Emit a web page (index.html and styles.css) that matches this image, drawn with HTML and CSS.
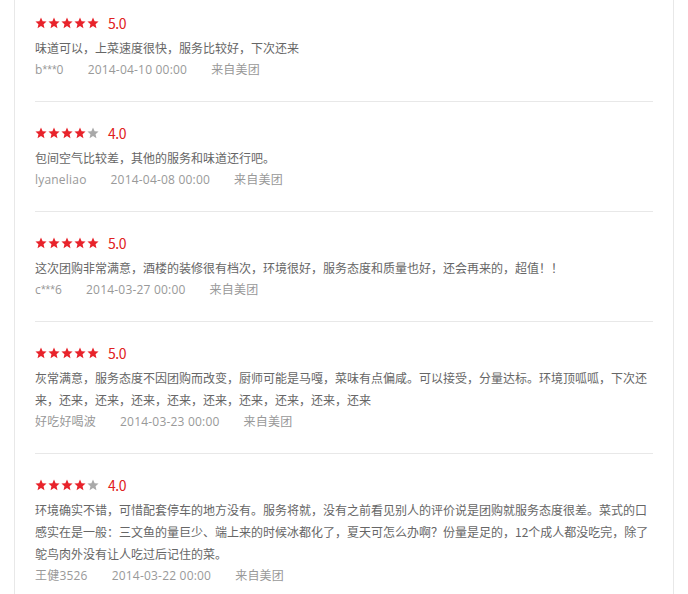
FILE: index.html
```html
<!DOCTYPE html>
<html lang="zh-CN">

<head>
    <meta charset="UTF-8">
    <meta name="viewport" content="width=device-width, initial-scale=1.0">
    <title>用户评价</title>
    <link rel="stylesheet" href="styles.css">
</head>

<body>
    <svg width="0" height="0" class="defs">
        <defs>
            <symbol id="star" viewBox="0 0 24 24">
                <path d="M12 1.2l3.2 7.3 7.9.7-6 5.3 1.8 7.8L12 18.2l-6.9 4.1 1.8-7.8-6-5.3 7.9-.7z" />
            </symbol>
        </defs>
    </svg>

    <div class="reviews">
        <!-- 评价 1 -->
        <div class="review">
            <div class="rating">
                <span class="stars">
                    <svg class="star on"><use href="#star" /></svg>
                    <svg class="star on"><use href="#star" /></svg>
                    <svg class="star on"><use href="#star" /></svg>
                    <svg class="star on"><use href="#star" /></svg>
                    <svg class="star on"><use href="#star" /></svg>
                </span>
                <span class="score">5.0</span>
            </div>
            <p class="content">味道可以，上菜速度很快，服务比较好，下次还来</p>
            <div class="meta">
                <span>b<span class="mask">***</span>0</span>
                <span>2014-04-10 00:00</span>
                <span>来自美团</span>
            </div>
        </div>

        <!-- 评价 2 -->
        <div class="review">
            <div class="rating">
                <span class="stars">
                    <svg class="star on"><use href="#star" /></svg>
                    <svg class="star on"><use href="#star" /></svg>
                    <svg class="star on"><use href="#star" /></svg>
                    <svg class="star on"><use href="#star" /></svg>
                    <svg class="star"><use href="#star" /></svg>
                </span>
                <span class="score">4.0</span>
            </div>
            <p class="content">包间空气比较差，其他的服务和味道还行吧。</p>
            <div class="meta">
                <span>lyaneliao</span>
                <span>2014-04-08 00:00</span>
                <span>来自美团</span>
            </div>
        </div>

        <!-- 评价 3 -->
        <div class="review">
            <div class="rating">
                <span class="stars">
                    <svg class="star on"><use href="#star" /></svg>
                    <svg class="star on"><use href="#star" /></svg>
                    <svg class="star on"><use href="#star" /></svg>
                    <svg class="star on"><use href="#star" /></svg>
                    <svg class="star on"><use href="#star" /></svg>
                </span>
                <span class="score">5.0</span>
            </div>
            <p class="content">这次团购非常满意，酒楼的装修很有档次，环境很好，服务态度和质量也好，还会再来的，超值！！</p>
            <div class="meta">
                <span>c<span class="mask">***</span>6</span>
                <span>2014-03-27 00:00</span>
                <span>来自美团</span>
            </div>
        </div>

        <!-- 评价 4 -->
        <div class="review">
            <div class="rating">
                <span class="stars">
                    <svg class="star on"><use href="#star" /></svg>
                    <svg class="star on"><use href="#star" /></svg>
                    <svg class="star on"><use href="#star" /></svg>
                    <svg class="star on"><use href="#star" /></svg>
                    <svg class="star on"><use href="#star" /></svg>
                </span>
                <span class="score">5.0</span>
            </div>
            <p class="content">灰常满意，服务态度不因团购而改变，厨师可能是马嘎，菜味有点偏咸。可以接受，分量达标。环境顶呱呱，下次还来，还来，还来，还来，还来，还来，还来，还来，还来，还来</p>
            <div class="meta">
                <span>好吃好喝波</span>
                <span>2014-03-23 00:00</span>
                <span>来自美团</span>
            </div>
        </div>

        <!-- 评价 5 -->
        <div class="review">
            <div class="rating">
                <span class="stars">
                    <svg class="star on"><use href="#star" /></svg>
                    <svg class="star on"><use href="#star" /></svg>
                    <svg class="star on"><use href="#star" /></svg>
                    <svg class="star on"><use href="#star" /></svg>
                    <svg class="star"><use href="#star" /></svg>
                </span>
                <span class="score">4.0</span>
            </div>
            <p class="content">环境确实不错，可惜配套停车的地方没有。服务将就，没有之前看见别人的评价说是团购就服务态度很差。菜式的口感实在是一般：三文鱼的量巨少、端上来的时候冰都化了，夏天可怎么办啊？份量是足的，12个成人都没吃完，除了鸵鸟肉外没有让人吃过后记住的菜。</p>
            <div class="meta">
                <span>王健3526</span>
                <span>2014-03-22 00:00</span>
                <span>来自美团</span>
            </div>
        </div>
    </div>
</body>

</html>
```

FILE: styles.css
```css
/* General styles */
body {
    font-family: "Microsoft YaHei", "Noto Sans CJK SC", sans-serif;
    background-color: #fff;
    margin: 0;
    padding: 0;
    overflow: hidden;
}

.defs {
    position: absolute;
}

.reviews {
    width: 660px;
    box-sizing: border-box;
    margin: -8px 0 0 14px;
    padding: 0 20px;
    border-left: 1px solid #e8e8e8;
    border-right: 1px solid #e8e8e8;
}

.review {
    padding: 23px 0 20px 0;
    border-bottom: 1px solid #e8e8e8;
}

.rating {
    display: flex;
    align-items: center;
    height: 16px;
}

.stars {
    display: flex;
    gap: 1px;
}

.star {
    width: 12px;
    height: 12px;
    fill: #a9a9a9;
}

.star.on {
    fill: #e8232b;
}

.score {
    margin-left: 9px;
    font-size: 14px;
    color: #e02020;
    letter-spacing: -0.5px;
}

.content {
    margin: 6px 0 0 0;
    font-size: 12px;
    line-height: 22px;
    color: #666;
}

.meta {
    display: flex;
    gap: 24px;
    font-family: "Open Sans", "Noto Sans CJK SC", sans-serif;
    font-size: 12px;
    line-height: 22px;
    letter-spacing: 0.2px;
    color: #999;
}

/* 用户名中的星号较窄 */
.meta .mask {
    font-family: "Liberation Sans", sans-serif;
    letter-spacing: 0;
}
```
